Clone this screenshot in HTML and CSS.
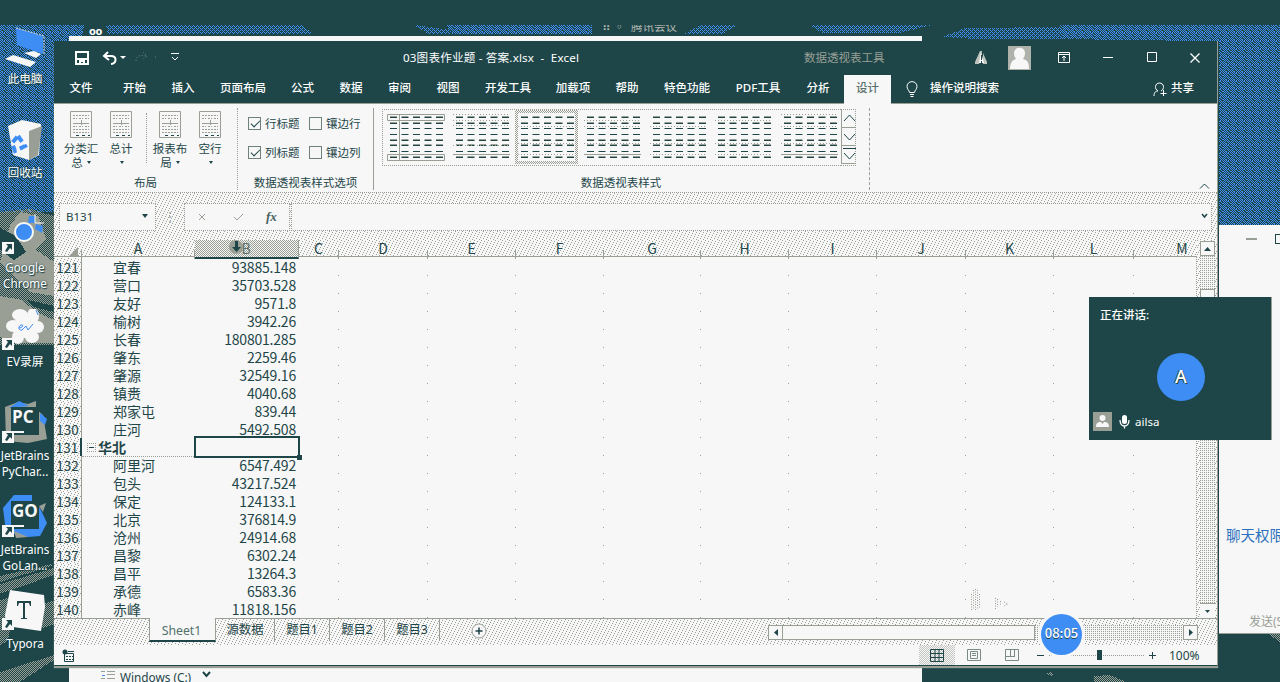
FILE: index.html
```html
<!DOCTYPE html>
<html lang="zh-CN">
<head>
<meta charset="utf-8">
<title>03图表作业题 - 答案.xlsx - Excel</title>
<link rel="stylesheet" href="styles.css">
</head>
<body>
<div class="desktop">
  <svg class="wallpaper" width="1280" height="682" shape-rendering="crispEdges" aria-hidden="true">
    <defs>
      <pattern id="blue" width="8" height="8" patternUnits="userSpaceOnUse"><path fill="#3d8df5" d="M0 0h1v1h-1zM2 0h1v1h-1zM4 0h1v1h-1zM6 0h1v1h-1zM1 1h1v1h-1zM3 1h2v1h-2zM7 1h1v1h-1zM0 2h1v1h-1zM2 2h1v1h-1zM5 2h1v1h-1zM1 3h1v1h-1zM3 3h1v1h-1zM6 3h2v1h-2zM0 4h1v1h-1zM2 4h1v1h-1zM4 4h1v1h-1zM1 5h1v1h-1zM3 5h1v1h-1zM5 5h1v1h-1zM7 5h1v1h-1zM0 6h1v1h-1zM4 6h1v1h-1zM6 6h1v1h-1zM1 7h2v1h-2zM5 7h1v1h-1zM7 7h1v1h-1z"/></pattern>
      <pattern id="sparse" width="4" height="4" patternUnits="userSpaceOnUse"><path fill="#3d8df5" d="M0 0h1v1h-1zM2 0h1v1h-1zM1 1h1v1h-1zM0 2h1v1h-1zM2 2h1v1h-1zM3 3h1v1h-1z"/></pattern>
      <pattern id="fog" width="4" height="4" patternUnits="userSpaceOnUse"><path fill="#9a9f96" d="M0 0h1v1h-1zM2 0h1v1h-1zM1 1h1v1h-1zM3 1h1v1h-1zM0 2h1v1h-1zM2 2h1v1h-1zM1 3h1v1h-1zM3 3h1v1h-1z"/></pattern>
    </defs>
    <rect width="1280" height="682" fill="#1e4649"/>
    <path fill="url(#blue)" d="M0 25H84L82 36H69V41H54V212H0z"/>
    <path fill="url(#sparse)" d="M106 25H302L313 34H108zM414 25L450 30V34H428zM684 34L700 25H738L722 34zM810 25H932L900 33H822zM942 37L965 28 1060 27V39H975z"/>
    <path fill="url(#blue)" d="M446 25H592V34H452zM1060 25H1280V226H1218V41H1200L1060 39z"/>
    <path fill="url(#fog)" d="M0 212L30 209 54 216V345H0z"/>
    <path fill="#9a9f96" d="M10 226L20 212 38 216 46 238 36 250 54 262V296L30 292 0 262zM0 296L22 300 36 312 54 320V343H8L0 336z"/>
    <path fill="#1e4649" d="M0 228L16 236 26 252 14 260 0 250zM28 300L54 306V312L34 307z"/>
    <path fill="url(#fog)" d="M0 584L54 568V575L0 594zM0 600L16 596 8 640 0 646zM38 606L54 600V624L42 628zM0 672L54 655V660L20 682H0zM0 576L52 564V566L0 582z"/>
    <path fill="url(#fog)" d="M1094 676L1110 675 1126 682H1094zM1045 674L1052 672 1054 677zM1268 634H1280V642z"/>
  </svg>

  <div class="launcher pc"><svg width="44" height="44"><path fill="#3d8df5" d="M12 4L39 12 39 30 13 21z"/><path fill="none" stroke="#d8dbd7" d="M12 4L40 12V30" stroke-dasharray="2 1"/><path class="ivory" d="M20 29L30 27 37 30 32 34zM1 35L9 31 32 38 26 43z"/></svg><span>此电脑</span></div>
  <div class="launcher bin"><svg width="44" height="46"><path class="ivory" d="M4 11L18 5 37 9 35 40 25 45 9 40z"/><path class="haze" d="M25 16L38 11 34 40 25 45z"/><path fill="none" stroke="#3d8df5" stroke-width="4" stroke-dasharray="7 4" d="M14 21l7 10-10 5-3-8z"/></svg><span>回收站</span></div>
  <div class="launcher chrome"><svg width="48" height="46"><path fill="#3d8df5" d="M29 3h6v7h-7zM36 11l7 2-1 7-7-4z"/><path fill="none" stroke="#f7f7f7" d="M35 1v9h9"/><circle cx="24" cy="19" r="9" fill="#3d8df5" stroke="#f7f7f7" stroke-width="2"/><use href="#shortcut"/></svg><span>Google<br>Chrome</span></div>
  <div class="launcher ev"><svg width="48" height="44"><g class="ivory"><circle cx="24" cy="18" r="11"/><ellipse cx="20" cy="6" rx="8" ry="6"/><ellipse cx="33" cy="7" rx="6" ry="8"/><ellipse cx="38" cy="18" rx="6" ry="6"/><ellipse cx="32" cy="28" rx="7" ry="6"/><ellipse cx="18" cy="28" rx="6" ry="7"/><ellipse cx="13" cy="17" rx="7" ry="6"/></g><path fill="none" stroke="#3d8df5" d="M19 19c4 0 5-4 2-3s-3 6 1 5l4-4 2 4 5-6M36 1l2 5"/><use href="#shortcut"/></svg><span>EV录屏</span></div>
  <div class="launcher py"><svg width="48" height="48"><path class="haze" d="M5 8L18 3 28 5 36 2V10L43 16 47 40 28 44 6 42z"/><path fill="#3d8df5" d="M9 9L19 2 29 7zM40 14l7 6-2 6-5-4z"/><path class="deep" d="M11 8h28v28H11z"/><path class="ivory" d="M13 32h11v2H13z"/><text x="12" y="24">PC</text><use href="#shortcut" y="3"/></svg><span>JetBrains<br>PyChar...</span></div>
  <div class="launcher go"><svg width="48" height="48"><path fill="#3d8df5" d="M3 15L14 2H32V9L40 15 47 30 40 43 28 44 6 39z"/><path class="haze" d="M39 13l7-3-3 9zM14 38l14 6-12 1z"/><path class="deep" d="M11 8h28v28H11z"/><path class="ivory" d="M13 32h11v2H13z"/><text x="12" y="24">GO</text><use href="#shortcut" y="3"/></svg><span>JetBrains<br>GoLan...</span></div>
  <div class="launcher ty"><svg width="48" height="48"><path class="ivory" d="M10 3L44 8 45 20 41 44 6 39 5 28z"/><path class="deep" d="M17 14h14v5h-1l-1-3h-4v15h2v1h-6v-1h2V16h-4l-1 3h-1z"/><use href="#shortcut" y="2"/></svg><span>Typora</span></div>
  <svg width="0" height="0"><defs><g id="shortcut"><rect x="2" y="29" width="12" height="12" fill="#f7f7f7"/><path fill="#1e4649" d="M6 31h6v6l-2-2-3 4-2-1 3-5z"/></g></defs></svg>

  <div class="eyes">oo</div>
  <div class="meeting-title">⠿ ◦&nbsp; 腾讯会议</div>

  <section class="explorer">
    <div class="drive"><svg width="16" height="10"><path stroke="#9a9f96" d="M1 1.500h4m2 0h8M7 4.500h8M1 8.500h4m2 0h8"/><path stroke="#3d8df5" d="M2 5.500h3"/></svg><span>Windows (C:)</span><svg width="9" height="10"><path class="line" stroke-width="2" d="M1 2l3.500 4L8 2"/></svg></div>
  </section>

  <section class="chat">
    <div class="chat-controls"><i></i><b></b></div>
    <div class="chat-rights">聊天权限</div>
    <div class="chat-send">发送(S)</div>
  </section>

  <main class="excel">
    <header class="titlebar">
      <div class="quick">
        <svg width="14" height="14"><path fill="none" stroke="#fff" stroke-width="2" d="M1 1h12v12H1z"/><path fill="#fff" d="M1 7h12v2H1zM4 9h6v4H8v-2H6v2H4z"/></svg>
        <svg width="24" height="14"><path fill="none" stroke="#fff" stroke-width="2" d="M6 1L2 5l5 4M2 5h7c6 0 6 7 0 8"/><path fill="#fff" d="M18 5h6l-3 3z"/></svg>
        <svg width="24" height="14"><path fill="none" stroke="#6d8382" stroke-dasharray="1 2" d="M1 10c0-6 5-6 10-5M8 1l4 4-4 3M20 6h2"/></svg>
        <svg width="10" height="9"><path fill="none" stroke="#fff" d="M1 .5h8M2 4l3 3 3-3"/></svg>
      </div>
      <div class="doc">03图表作业题 - 答案.xlsx &nbsp;-&nbsp; Excel</div>
      <div class="tool-title">数据透视表工具</div>
      <div class="winctl">
        <svg width="14" height="14"><path fill="#bfc4bf" d="M6 0L1 11v2h4l2-5 1-8zM9 2l4 9v2H9z"/><path fill="#fff" d="M7 1l3 11H5z"/><path stroke="#1e4649" d="M7.500 4v5m0 1v2"/></svg>
        <svg class="user" width="23" height="24"><rect width="23" height="24" fill="#aeb2aa"/><path fill="#f7f7f7" d="M6 7c0-7 11-7 11 0 0 3-1 4-2 6 4 1 6 3 6 10H2c0-6 2-9 6-10-1-2-2-3-2-6z"/></svg>
        <svg width="12" height="11"><path fill="none" stroke="#fff" d="M.5.5h11v10H.5zM0 2.500h12M6 9V4M4 6l2-2 2 2"/></svg>
        <svg width="10" height="11"><path stroke="#fff" d="M0 5.500h10"/></svg>
        <svg width="10" height="11"><path fill="none" stroke="#fff" d="M.5.5h9v9h-9z"/></svg>
        <svg width="10" height="10"><path stroke="#fff" stroke-width="1.300" d="M.5.5l9 9m0-9l-9 9"/></svg>
      </div>
    </header>

    <nav class="tabs">
      <span class="w48">文件</span><span class="w59">开始</span><span class="w38">插入</span><span class="w82">页面布局</span><span class="w37">公式</span><span class="w60">数据</span><span class="w37">审阅</span><span class="w60">视图</span><span class="w60">开发工具</span><span class="w70">加载项</span><span class="w38">帮助</span><span class="w82">特色功能</span><span class="w60">PDF工具</span><span class="w56">分析</span><span class="w47 active">设计</span>
      <svg class="bulb" width="12" height="17"><path fill="none" stroke="#fff" d="M3.500 11.500C3 9 1 8 1 5.500 1 -1 11 -1 11 5.500 11 8 9 9 8.500 11.500zM4 13.500h4M4.500 15.500h3"/></svg>
      <span class="tell">操作说明搜索</span>
      <svg class="share-icon" width="14" height="15"><path fill="none" stroke="#fff" d="M1 14c0-4 2-5 4-5C1 7 2 1 6.500 1S12 7 8 9M10.500 8v6M7.500 11.500h6"/></svg>
      <span class="share">共享</span>
    </nav>

    <section class="ribbon">
      <div class="group layout">
        <div class="big-row">
          <div class="big"><svg width="22" height="27"><use href="#sheet"/></svg><span>分类汇<br>总 <i></i></span></div>
          <div class="big"><svg width="22" height="27"><use href="#sheet"/></svg><span>总计<br><i></i></span></div>
          <div class="rule"></div>
          <div class="big"><svg width="22" height="27"><use href="#sheet"/></svg><span>报表布<br>局 <i></i></span></div>
          <div class="big"><svg width="22" height="27"><use href="#sheet"/></svg><span>空行<br><i></i></span></div>
        </div>
        <div class="caption">布局</div>
      </div>
      <div class="group options">
        <div class="checks">
          <label><i class="on"></i>行标题</label><label><i></i>镶边行</label>
          <label><i class="on"></i>列标题</label><label><i></i>镶边列</label>
        </div>
        <div class="caption">数据透视表样式选项</div>
      </div>
      <div class="group styles">
        <div class="gallery">
          <div class="thumbs">
            <svg width="63" height="54"><use href="#thumb"/><path fill="none" stroke="#9a9f96" d="M3.500 4.500h57v6h-57zM3.500 44.500h57v6h-57zM15.500 4v46"/></svg>
            <svg width="63" height="54"><use href="#thumb"/><path class="dash" d="M3 4.500h57M3 10.500h57M3 15.500h57M3 35.500h57"/><path stroke="#9a9f96" d="M3 44.500h57"/></svg>
            <svg class="chosen" width="63" height="54"><use href="#thumb"/><path class="dash" d="M3 16.500h57M3 33.500h57M3 44.500h57"/></svg>
            <svg width="63" height="54"><use href="#thumb"/><path class="dash" d="M3 10.500h57M3 16.500h57M3 33.500h57"/><path stroke="#9a9f96" d="M3 44.500h57"/></svg>
            <svg width="63" height="54"><use href="#thumb"/><path class="dash" d="M3 16.500h57M3 33.500h57M3 44.500h57"/></svg>
            <svg width="63" height="54"><use href="#thumb"/><path class="dash" d="M3 10.500h57M3 33.500h57M3 44.500h57"/></svg>
            <svg width="63" height="54"><use href="#thumb"/><path class="dash" d="M3 4.500h57M3 16.500h57M3 33.500h57"/><path stroke="#9a9f96" d="M3 44.500h57"/></svg>
          </div>
          <div class="spin">
            <svg width="15" height="19"><path class="line" d="M2 12l5.500-6L13 12"/></svg>
            <svg width="15" height="18"><path class="line" d="M2 6l5.500 6L13 6"/></svg>
            <svg width="15" height="18"><path class="line" d="M1 2.500h13M2 7l5.500 6L13 7"/></svg>
          </div>
        </div>
        <div class="caption">数据透视表样式</div>
      </div>
      <svg class="collapse" width="11" height="7"><path class="line" d="M1 5.500L5.500 1 10 5.500"/></svg>
      <svg class="defs" width="0" height="0"><defs>
        <g id="sheet"><path fill="#f7f7f7" stroke="#9a9f96" d="M.5.5h21v26H.5z"/><path stroke="#9a9f96" stroke-dasharray="2 1" d="M3 4.500h16M3 7.500h4m2 0h4m2 0h4M3 15.500h4m2 0h4m2 0h4M3 18.500h16M3 21.500h16"/><path stroke="#9a9f96" d="M3 12.500h16M11.500 9v5"/><path stroke="#1e4649" stroke-dasharray="3 3" d="M6 24.500h14"/></g>
        <g id="thumb"><path fill="none" stroke="#9a9f96" stroke-dasharray="7 4.500" d="M6 6.500h54M6 12.500h54M6 29.500h54M6 34.500h54M6 46.500h54"/><path fill="none" stroke="#1e4649" stroke-dasharray="7 4.500" d="M6 7.500h54M6 13.500h54M6 18.500h54M6 24.500h54M6 30.500h54M6 35.500h54M6 41.500h54M6 47.500h54"/></g>
      </defs></svg>
    </section>

    <section class="formula grain">
      <div class="namebox"><span>B131</span><i></i></div>
      <div class="grip">⋮</div>
      <div class="fx"><svg width="8" height="8"><path stroke="#9a9f96" d="M1 1l6 6m0-6L1 7"/></svg><svg width="11" height="8"><path fill="none" stroke="#9a9f96" d="M1 4l3 3 6-6"/></svg><em>fx</em></div>
      <div class="entry"><svg width="7" height="6"><path class="line" stroke-width="1.500" d="M1 1l2.500 3L6 1"/></svg></div>
    </section>

    <section class="sheet">
      <div class="grid-pane">
        <div class="cols grain">
          <span class="corner"><svg width="9" height="9"><path fill="#9a9f96" d="M9 0v9H0z"/></svg></span>
          <span>A</span><span class="sel"><svg width="18" height="16"><circle cx="9" cy="7" r="7" fill="#9a9f96"/><path fill="#1e4649" d="M8 1h3v6h3l-4.500 5L5 7h3z"/></svg>B</span><span>C</span><span>D</span><span>E</span><span>F</span><span>G</span><span>H</span><span>I</span><span>J</span><span>K</span><span>L</span><span class="last">M</span>
        </div>
        <div class="rows">
          <div class="row"><b class="grain">121</b><span>宜春</span><u>93885.148</u></div>
          <div class="row"><b class="grain">122</b><span>营口</span><u>35703.528</u></div>
          <div class="row"><b class="grain">123</b><span>友好</span><u>9571.8</u></div>
          <div class="row"><b class="grain">124</b><span>榆树</span><u>3942.26</u></div>
          <div class="row"><b class="grain">125</b><span>长春</span><u>180801.285</u></div>
          <div class="row"><b class="grain">126</b><span>肇东</span><u>2259.46</u></div>
          <div class="row"><b class="grain">127</b><span>肇源</span><u>32549.16</u></div>
          <div class="row"><b class="grain">128</b><span>镇赉</span><u>4040.68</u></div>
          <div class="row"><b class="grain">129</b><span>郑家屯</span><u>839.44</u></div>
          <div class="row"><b class="grain">130</b><span>庄河</span><u>5492.508</u></div>
          <div class="row region"><b class="grain">131</b><span><i></i>华北</span><u></u></div>
          <div class="row"><b class="grain">132</b><span>阿里河</span><u>6547.492</u></div>
          <div class="row"><b class="grain">133</b><span>包头</span><u>43217.524</u></div>
          <div class="row"><b class="grain">134</b><span>保定</span><u>124133.1</u></div>
          <div class="row"><b class="grain">135</b><span>北京</span><u>376814.9</u></div>
          <div class="row"><b class="grain">136</b><span>沧州</span><u>24914.68</u></div>
          <div class="row"><b class="grain">137</b><span>昌黎</span><u>6302.24</u></div>
          <div class="row"><b class="grain">138</b><span>昌平</span><u>13264.3</u></div>
          <div class="row"><b class="grain">139</b><span>承德</span><u>6583.36</u></div>
          <div class="row"><b class="grain">140</b><span>赤峰</span><u>11818.156</u></div>
        </div>
      </div>
      <div class="vscroll grain">
        <div class="vbtn"><svg width="7" height="4"><path fill="#1e4649" d="M0 4L3.500 0 7 4z"/></svg></div>
        <div class="vtrack"><div class="vthumb"></div></div>
        <div class="vbtn low"><svg width="5" height="3"><path fill="#1e4649" d="M0 0h5L2.500 3z"/></svg></div>
      </div>
    </section>

    <footer class="sheetbar grain">
      <div class="sheet-nav"></div>
      <span class="sheet-tab current">Sheet1</span><span class="sheet-tab src">源数据</span><span class="sheet-tab">题目1</span><span class="sheet-tab">题目2</span><span class="sheet-tab">题目3</span>
      <svg class="add" width="16" height="16"><circle cx="8" cy="8" r="7" fill="#f7f7f7" stroke="#9a9f96"/><path stroke="#1e4649" stroke-width="1.500" d="M4.500 8h7M8 4.500v7"/></svg>
      <div class="hscroll">
        <div class="hbtn"><svg width="4" height="7"><path fill="#1e4649" d="M4 0v7L0 3.500z"/></svg></div>
        <div class="hthumb"></div>
        <div class="htrack"></div>
        <div class="hbtn"><svg width="4" height="7"><path fill="#1e4649" d="M0 0v7l4-3.500z"/></svg></div>
      </div>
    </footer>
    <footer class="status">
      <svg class="macro" width="13" height="13"><path fill="none" stroke="#1e4649" d="M2.500 4.500h9v8h-9zM6 2.500h6"/><circle cx="3" cy="3" r="2.500" fill="#1e4649"/><path stroke="#1e4649" stroke-dasharray="2 1" d="M4 7.500h7M4 10.500h7"/></svg>
      <div class="views">
        <span class="dense"><svg width="14" height="13"><path fill="none" stroke="#1e4649" d="M.5.5h13v12H.5zM5 0v13M9 0v13M0 4.500h14M0 8.500h14"/></svg></span>
        <span><svg width="14" height="12"><path fill="none" stroke="#7a8a84" d="M.5.5h13v11H.5zM3.500 2.500h7v7h-7zM5 4.500h4M5 6.500h4"/></svg></span>
        <span><svg width="14" height="12"><path fill="none" stroke="#7a8a84" d="M.5.5h13v11H.5zM5.500 0v7.500M9.500 0v7.500M0 7.500h10"/></svg></span>
      </div>
      <div class="zoom"><i class="minus"></i><div class="slider"><b></b></div><i class="plus"></i><span>100%</span></div>
    </footer>
  </main>

  <svg class="ghost" width="40" height="26"><path class="dots" d="M2.500 8v16M4.500 4v20M6.500 3v21M8.500 4v20M10.500 8v14M26.500 12v11M28.500 13v8M31.500 15v5M35 16l4 2-4 2"/></svg>

  <aside class="speaker">
    <div class="speaking">正在讲话:</div>
    <div class="avatar">A</div>
    <div class="who"><svg width="19" height="19"><rect width="19" height="19" fill="#9a9f96"/><circle cx="9.500" cy="6" r="3" fill="#f7f7f7"/><path fill="#f7f7f7" d="M3 15c0-5 3-5 5-5l1.500 2 1.500-2c3 0 5 1 5 5z"/></svg><svg width="11" height="15"><rect x="3" y="1" width="5" height="9" rx="2.500" fill="#fff"/><path fill="none" stroke="#fff" stroke-width="1.300" d="M1 6c0 8 9 8 9 0M5.500 12v2.500"/></svg><span>ailsa</span></div>
  </aside>
  <div class="timer">08:05</div>
</div>
</body>
</html>
```

FILE: styles.css
```css
:root {
  --deep: #1e4649;
  --paper: #f7f7f7;
  --haze: #9a9f96;
  --blue: #3d8df5;
  --px: conic-gradient(from 270deg at 1px 1px, #9a9f96 90deg, transparent 0);
}
* { box-sizing: border-box; }
body {
  margin: 0;
  overflow: hidden;
  background: var(--deep);
  color: var(--deep);
  font: 11.5px/15px "Noto Sans", "Noto Sans CJK SC", sans-serif;
}
svg { display: block; flex: none; }
.desktop { position: relative; width: 1280px; height: 682px; overflow: hidden; }
.wallpaper { position: absolute; inset: 0; }
.line { fill: none; stroke: var(--deep); }
.ivory { fill: var(--paper); }
.deep { fill: var(--deep); }
.haze { fill: var(--haze); }
.dash { stroke: var(--haze); stroke-dasharray: 1 2; }
.grain {
  background-color: var(--paper);
  background-image: var(--px), var(--px), var(--px), var(--px), var(--px), var(--px), var(--px);
  background-size: 7px 7px;
  background-position: 0 0, 3px 1px, 6px 2px, 2px 3px, 5px 4px, 1px 5px, 4px 6px;
}

/* desktop launchers */
.launcher {
  position: absolute;
  left: 0;
  width: 50px;
  color: #fff;
  font-size: 11.7px;
  line-height: 16px;
  text-align: center;
  white-space: nowrap;
}
.launcher span { display: block; text-shadow: 0 0 2px var(--deep), 1px 1px 1px var(--deep); }
.launcher text { fill: #f7f7f7; font: bold 17px "Open Sans", sans-serif; }
.pc svg, .bin svg { margin-left: 4px; }
.pc { top: 24px; } .pc span { margin-top: 2px; }
.bin { top: 115px; } .bin span { margin-top: 3px; }
.chrome { top: 213px; }
.ev { top: 309px; }
.py { top: 399px; } .go { top: 493px; } .ty { top: 587px; }

.eyes { position: absolute; left: 89px; top: 24px; color: #fff; font: bold 11px/13px "Noto Sans", sans-serif; letter-spacing: -.3px; }
.meeting-title {
  position: absolute; left: 600px; top: 25px; width: 84px; height: 8px;
  color: #b3b7b0; line-height: 4px; overflow: hidden; white-space: nowrap; text-align: right;
  padding-right: 7px;
}

.explorer {
  position: absolute; left: 69px; top: 36px; width: 853px; height: 646px;
  background: var(--paper); padding: 634px 0 0 31px; overflow: hidden;
}
.drive { display: flex; gap: 4px; font-size: 11.800px; }
.drive span { margin-right: 7px; }

.chat {
  position: absolute; left: 1219px; top: 225px; width: 61px; height: 409px;
  background: var(--paper); border-bottom: 1px solid var(--haze);
  overflow: hidden; white-space: nowrap;
  display: flex; flex-direction: column;
}
.chat-controls { display: flex; align-items: center; padding: 9px 0 0 27px; gap: 18px; }
.chat-controls i { width: 11px; height: 2px; background: var(--haze); flex: none; }
.chat-controls b { width: 10px; height: 10px; border: 1px solid var(--deep); flex: none; }
.chat-rights { margin: 281px 0 0 7px; font-size: 14.500px; line-height: 20px; color: #2d70bd; }
.chat-send { margin: 69px 0 0 30px; font-size: 12px; color: var(--haze); }

/* spreadsheet window */
.excel {
  position: absolute; left: 54px; top: 41px; width: 1164px; height: 625px;
  background: var(--paper); display: flex; flex-direction: column;
  border-right: 1px solid var(--haze); border-bottom: 1px solid var(--deep);
  box-shadow: 1px 0 0 var(--deep), 0 2px 1px #9a9f96;
}
.titlebar { height: 34px; padding-bottom: 1px; background: var(--deep); color: #fff; display: flex; align-items: center; white-space: nowrap; }
.quick { display: flex; align-items: center; padding-left: 21px; width: 349px; }
.quick svg:nth-child(2) { margin-left: 13px; }
.quick svg:nth-child(3) { margin-left: 9px; }
.quick svg:nth-child(4) { margin-left: 11px; }
.doc { width: 401px; font-size: 11.600px; letter-spacing: .18px; }
.tool-title { width: 170px; color: var(--haze); }
.winctl { display: flex; align-items: center; }
.winctl svg:nth-child(2) { margin-left: 20px; }
.winctl svg:nth-child(3) { margin-left: 27px; }
.winctl svg:nth-child(4) { margin-left: 33px; }
.winctl svg:nth-child(5) { margin-left: 34px; }
.winctl svg:nth-child(6) { margin-left: 33px; }

.tabs {
  height: 29px; padding-left: 3px; background: var(--deep); color: #fff;
  display: flex; align-items: center; border-bottom: 1px solid var(--haze);
  white-space: nowrap; font-weight: 500;
}
.tabs span { text-align: center; line-height: 24px; padding-bottom: 2px; }
.w37 { width: 37px; } .w38 { width: 38px; } .w47 { width: 47px; } .w48 { width: 48px; }
.w56 { width: 56px; padding-left: 4px; } .w59 { width: 59px; } .w60 { width: 60px; } .w70 { width: 70px; } .w82 { width: 82px; }
.tabs .active { background: var(--paper); color: #58706b; align-self: stretch; margin-bottom: -1px; line-height: 26px; }
.bulb { margin: 0 12px 0 15px; }
.share-icon { margin: 0 4px 0 154px; }

.ribbon { height: 89px; display: flex; padding-top: 4px; border-bottom: 1px dotted var(--haze); }
.group { display: flex; flex-direction: column; height: 82px; }
.caption { text-align: center; margin-top: auto; white-space: nowrap; }
.layout { width: 184px; border-right: 1px dotted var(--haze); }
.big-row { display: flex; padding: 3px 0 0 7px; }
.big { width: 40px; display: flex; flex-direction: column; align-items: center; text-align: center; white-space: nowrap; line-height: 14px; gap: 4px; }
.big i { display: inline-block; border: 2px solid transparent; border-top: 3px solid var(--deep); border-bottom: 0; margin: 0 0 3px 1px; }
.rule { width: 1px; height: 50px; border-left: 1px dotted var(--haze); margin: 2px 3px 0 5px; }
.options { width: 136px; border-right: 1px solid var(--haze); }
.checks { display: grid; grid-template-columns: 61px 60px; row-gap: 14px; padding: 8px 0 0 10px; }
.checks label { display: flex; align-items: center; gap: 4px; white-space: nowrap; }
.checks i { width: 13px; height: 13px; border: 1px solid #6f817b; flex: none; }
.checks .on::after { content: ""; display: block; width: 8px; height: 4px; margin: 2px 0 0 2px; border: solid var(--deep); border-width: 0 0 1.500px 1.500px; transform: rotate(-45deg); }
.styles { width: 496px; border-right: 1px dashed var(--haze); padding-left: 8px; }
.gallery { display: flex; margin-top: 1px; height: 57px; }
.thumbs { display: flex; width: 459px; gap: 2.700px; border: 1px dotted var(--haze); border-right: 0; padding-left: 1px; }
.thumbs .chosen { border: 3px solid transparent; background: repeating-conic-gradient(#9a9f96 0 25%, #f7f7f7 0 50%) 0 0/2px 2px border-box, var(--paper); background: linear-gradient(var(--paper), var(--paper)) padding-box, repeating-conic-gradient(#9a9f96 0 25%, #f7f7f7 0 50%) 0 0/2px 2px border-box; }
.chosen > * { transform: translate(-3px, -3px); }
.spin { width: 15px; outline: 1px dotted var(--haze); outline-offset: -1px; }
.spin svg { border-bottom: 1px solid var(--haze); border-left: 1px solid var(--haze); }
.collapse { margin: 75px 0 0 329px; }
.styles .caption { padding-right: 9px; }
.defs { width: 0; }

.formula { height: 47px; padding: 10px 5px 9px; display: flex; font-size: 11.500px; flex: none; }
.namebox { width: 97px; background: var(--paper); border: 1px dotted var(--haze); padding: 0 7px 2px 6px; display: flex; align-items: center; justify-content: space-between; }
.namebox i { border: 3px solid transparent; border-top: 4px solid var(--deep); border-bottom: 0; }
.grip { width: 28px; text-align: center; color: var(--haze); line-height: 28px; }
.fx { width: 106px; background: var(--paper); border: 1px dotted var(--haze); display: flex; align-items: center; padding-left: 13px; }
.fx svg:nth-child(2) { margin: 0 22px 0 27px; }
.fx em { font: italic bold 13px "Liberation Serif", serif; color: #48625f; }
.entry { flex: 1; margin-left: 1px; background: var(--paper); border: 1px dotted var(--haze); display: flex; justify-content: flex-end; align-items: center; padding: 0 3px 3px 0; }

.sheet { height: 378px; display: flex; overflow: hidden; flex: none; }
.grid-pane { width: 1143px; overflow: hidden; }
.cols {
  height: 17px; display: grid;
  grid-template-columns: 28px 113px 104px 40px 89px 88px 88px 97px 88px 88px 89px 88px 80px 97px;
  border-bottom: 1px solid var(--haze);
  font: 14px/17px "Noto Sans CJK SC", sans-serif; text-align: center;
}
.cols span { border-right: 1px solid var(--haze); border-image: linear-gradient(transparent 50%, #9a9f96 50%) 1; border-width: 0 1px 0 0; }
.cols .corner { display: flex; justify-content: flex-end; align-items: flex-end; padding: 0 3px 3px; }
.cols .sel {
  border-right: 1px solid var(--haze); border-image: none; border-bottom: 2px solid var(--deep);
  background: repeating-conic-gradient(#9a9f96 0 25%, #f7f7f7 0 50%) 0 0/2px 2px;
  display: flex; justify-content: center; padding-right: 15px; color: #5a6f6a;
}
.sel svg { margin-right: -4px; }
.rows {
  padding-top: 1px; height: 361px;
  --dot: linear-gradient(#9a9f96 1px, transparent 1px);
  background-image: var(--dot), var(--dot), var(--dot), var(--dot), var(--dot), var(--dot), var(--dot), var(--dot), var(--dot), var(--dot);
  background-size: 1px 18px;
  background-repeat: repeat-y;
  background-position: 284px 0, 373px 0, 461px 0, 549px 0, 646px 0, 734px 0, 822px 0, 911px 0, 999px 0, 1079px 0;
  border-right: 1px dotted var(--haze);
}
.row { height: 18px; display: grid; grid-template-columns: 28px 112px 106px; font: 14px/18px "Noto Sans CJK SC", sans-serif; }
.row b {
  font-weight: 400; font-size: 13.500px; text-align: center; line-height: 18px;
  border-right: 1px solid var(--haze); border-bottom: 1px solid var(--haze);
}
.row span { padding-left: 31px; white-space: nowrap; }
.row u { text-decoration: none; text-align: right; padding-right: 4px; letter-spacing: -.2px; }
.region b { border-right: 2px solid var(--deep); }
.region span { font-weight: 700; padding-left: 5px; display: flex; align-items: center; gap: 2px; border-bottom: 1px dotted var(--haze); }
.region i { width: 9px; height: 9px; border: 1px dotted var(--haze); background: linear-gradient(var(--deep), var(--deep)) center/5px 1px no-repeat; }
.region u { position: relative; margin: -2px 0 -1px; border: 2px solid var(--deep); }
.region u::after { content: ""; position: absolute; right: -4px; bottom: -4px; width: 5px; height: 5px; background: var(--deep); }

.vscroll { flex: 1; padding: 1px 2px 0 3px; display: flex; flex-direction: column; }
.vbtn { height: 15px; border: 1px solid var(--haze); background: var(--paper); display: flex; align-items: center; justify-content: center; }
.vbtn.low { border-width: 1px 0 0; }
.vtrack { flex: 1; background: var(--px) 0 0/2px 2px var(--paper); padding-top: 33px; }
.vthumb { height: 110px; background: var(--paper); border: 1px solid var(--haze); }

.sheetbar { height: 27px; border-top: 1px solid var(--haze); display: flex; flex: none; white-space: nowrap; }
.sheet-nav { width: 95px; }
.sheet-tab { width: 55px; height: 22px; text-align: center; font-size: 12.300px; line-height: 22px; border-right: 1px solid var(--haze); }
.sheet-tab.current { width: 67px; height: 24px; margin-top: -1px; padding-right: 2px; background: var(--paper); border-left: 1px solid var(--haze); border-bottom: 2px solid var(--deep); color: #53706b; line-height: 25px; }
.sheet-tab.src { width: 59px; }
.add { margin: 4px 0 0 31px; }
.hscroll { display: flex; height: 15px; margin: 6px 0 0 281px; width: 430px; }
.hbtn { width: 15px; border: 1px solid var(--haze); background: var(--paper); display: flex; align-items: center; justify-content: center; flex: none; }
.hthumb { width: 252px; background: var(--paper); border: solid var(--haze); border-width: 1px 1px 1px 0; }
.htrack { flex: 1; background: var(--px) 0 0/2px 2px var(--paper); }

.status { flex: 1; display: flex; align-items: center; }
.macro { margin-left: 8px; }
.views { display: flex; margin-left: 844px; align-self: stretch; }
.views span { width: 38px; display: flex; align-items: center; justify-content: center; }
.views .dense { width: 36px; background: repeating-conic-gradient(#c2c5c0 0 25%, #f7f7f7 0 50%) 0 0/2px 2px; }
.zoom { display: flex; align-items: center; margin-left: 6px; }
.zoom i { width: 7px; height: 7px; background: linear-gradient(var(--deep), var(--deep)) center/7px 1px no-repeat; }
.zoom .plus { background: linear-gradient(var(--deep), var(--deep)) center/7px 1px no-repeat, linear-gradient(var(--deep), var(--deep)) center/1px 7px no-repeat; }
.slider { width: 95px; height: 10px; margin: 0 5px; padding-left: 5px; display: flex; justify-content: center; background: linear-gradient(90deg, var(--haze) 1px, transparent 1px) 0 5px/2px 1px repeat-x; }
.slider b { width: 5px; background: var(--deep); }
.zoom span { margin-left: 13px; font-size: 12px; }

.ghost { position: absolute; left: 969px; top: 586px; }
.dots { fill: none; stroke: var(--haze); stroke-dasharray: 1 1.500; }

/* floating meeting widgets */
.speaker {
  position: absolute; left: 1089px; top: 297px; width: 183px; height: 143px;
  background: var(--deep); color: #fff; border-right: 1px solid var(--haze);
  display: flex; flex-direction: column; padding: 10px 0 0 4px;
}
.speaking { padding-left: 7px; font-weight: 500; }
.avatar { width: 48px; height: 48px; border-radius: 50%; background: var(--blue); margin: 31px 0 0 64px; text-align: center; font: 500 18px/47px "Noto Sans", sans-serif; text-shadow: 1px 1px 0 var(--deep), -1px 0 0 var(--deep); }
.who { display: flex; align-items: center; margin-top: 11px; }
.who svg + svg { margin: 0 5px 0 7px; }
.timer {
  position: absolute; left: 1041px; top: 614px; width: 41px; height: 41px; border-radius: 50%;
  background: var(--blue); box-shadow: 0 0 0 3px var(--paper);
  color: #fff; text-align: center; font: 500 13px/38px "Noto Sans CJK SC", sans-serif;
  text-shadow: 0 1px 0 var(--deep);
}
```
